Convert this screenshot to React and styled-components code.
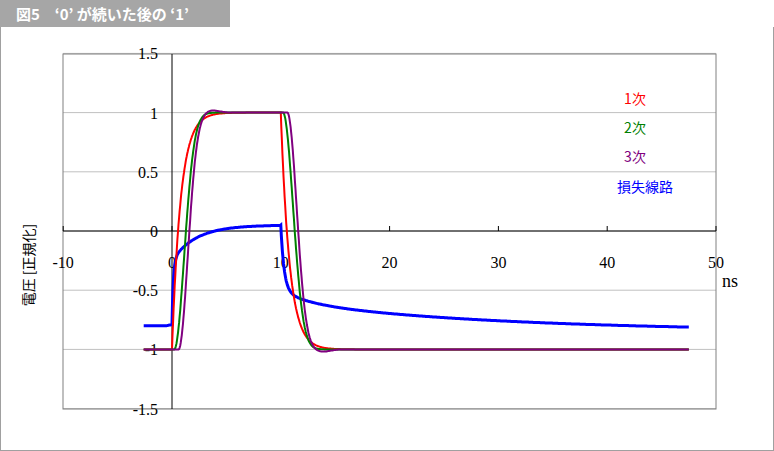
import React from "react";
import styled, { createGlobalStyle } from "styled-components";

const G = createGlobalStyle`
  html,body{margin:0;padding:0;background:#fff;}
`;
const Page = styled.div`
  width:774px;height:451px;display:flex;flex-direction:column;background:#fff;
  font-family:"Noto Sans CJK JP","Noto Sans",sans-serif;
`;
const Title = styled.div`
  width:230px;height:27px;background:#a6a6a6;color:#fff;font-weight:bold;
  font-size:15px;line-height:27px;padding-left:16px;box-sizing:border-box;white-space:pre;
`;
const Frame = styled.div`
  width:774px;height:424px;box-sizing:border-box;border:1px solid #a0a0a0;border-top:none;
`;
const Chart = styled.svg`display:block;`;
const Num = styled.text`font-family:"Liberation Serif",serif;font-size:${p => p.$size || 16}px;`;
const Jp = styled.text`font-family:"Noto Sans CJK JP",sans-serif;font-size:14px;`;

const X = t => 171 + t * 10.88;
const Y = v => 231 - v * 118.4;

function step(t, d, tau, shape) {
  const s = t - d;
  if (s <= 0) return 0;
  if (shape === "exp") return 1 - Math.exp(-s / tau);
  return 1 - Math.exp(-Math.pow(s / tau, 2));
}
function sig(t, d, tau, shape, os) {
  let v = -1 + 2 * step(t, d, tau, shape) - 2 * step(t, 10 + d, tau, shape);
  if (os) {
    v += os * Math.exp(-Math.pow((t - d - 3) / 1.0, 2));
    v -= os * Math.exp(-Math.pow((t - d - 13.2) / 1.0, 2));
  }
  return v;
}
function blue(t) {
  if (t < 0) return -0.8 + 0.02 * Math.max(0, t + 0.5);
  if (t < 10) {
    const a = 1 - Math.exp(-t / 0.12);
    return -0.8 + 0.55 * a + 0.3 * (1 - Math.exp(-t / 2.2)) * a;
  }
  const s = t - 10;
  return 0.05 - 0.55 * (1 - Math.exp(-s / 0.3)) - 0.1 * (1 - Math.exp(-s / 2.5)) - 0.25 * (1 - Math.exp(-s / 20));
}
const path = f => {
  let p = "";
  for (let t = -2.6; t <= 47.5; t += 0.05) p += (p ? "L" : "M") + X(t).toFixed(1) + " " + Y(f(t)).toFixed(1);
  return p;
};

const grid = [1.5, 1, 0.5, 0, -0.5, -1, -1.5];
const xs = [-10, 0, 10, 20, 30, 40, 50];

export default function App() {
  return (
    <Page>
      <G />
      <Title>{"図5　‘0’ が続いた後の ‘1’"}</Title>
      <Frame>
        <Chart width="772" height="423" viewBox="0 27 772 423">
          {grid.map(v => (
            <line key={v} x1="62" x2="715" y1={Y(v)} y2={Y(v)} stroke="#c0c0c0" />
          ))}
          <rect x="62" y="54" width="653" height="355" fill="none" stroke="#808080" />
          <line x1="62" x2="715" y1="231" y2="231" stroke="#000" />
          <line x1="171" x2="171" y1="54" y2="409" stroke="#000" />
          {xs.map(t => (
            <line key={t} x1={X(t)} x2={X(t)} y1="226" y2="231" stroke="#000" />
          ))}
          {grid.map(v => (
            <Num key={v} x="157" y={Y(v) + 6} textAnchor="end">{v}</Num>
          ))}
          {xs.map(t => (
            <Num key={t} x={X(t)} y="268" textAnchor="middle">{t}</Num>
          ))}
          <Num $size={18} x="729" y="287" textAnchor="middle">ns</Num>
          <Jp transform="translate(33 265) rotate(-90)" textAnchor="middle">電圧 [正規化]</Jp>
          <path d={path(blue)} fill="none" stroke="#0000ff" strokeWidth="3" />
          <path d={path(t => sig(t, 0, 0.8, "exp", 0))} fill="none" stroke="#ff0000" strokeWidth="2" />
          <path d={path(t => sig(t, 0.2, 1.3, "g", 0))} fill="none" stroke="#008000" strokeWidth="2" />
          <path d={path(t => sig(t, 0.6, 1.2, "g", 0.02))} fill="none" stroke="#800080" strokeWidth="2" />
          <g textAnchor="middle">
            <Jp x="634" y="104" fill="#ff0000">1次</Jp>
            <Jp x="634" y="133" fill="#008000">2次</Jp>
            <Jp x="634" y="162" fill="#800080">3次</Jp>
            <Jp x="644" y="192" fill="#0000ff">損失線路</Jp>
          </g>
        </Chart>
      </Frame>
    </Page>
  );
}
